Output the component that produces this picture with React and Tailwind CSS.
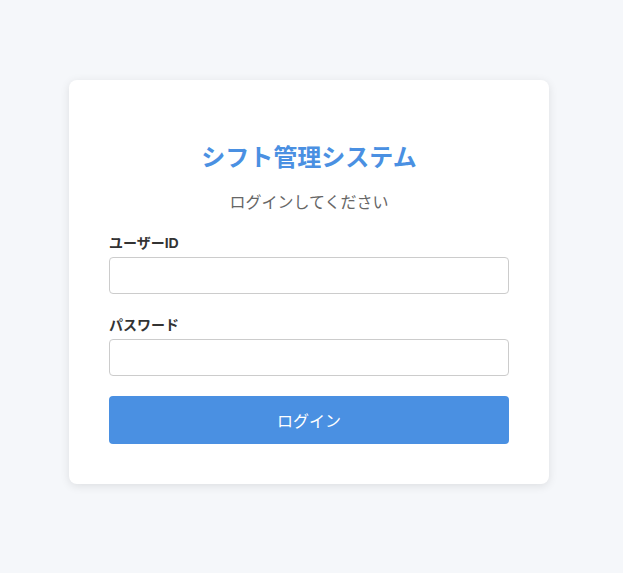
export default function App() {
  return (
    <div
      className="min-h-[573px] bg-[#f5f7fa] pt-[80px]"
      style={{ fontFamily: '"Liberation Sans", "Noto Sans CJK JP", sans-serif' }}
    >
      <div className="ml-[69px] w-[480px] rounded-lg bg-white px-10 pt-[60px] pb-10 shadow-[0_2px_10px_rgba(0,0,0,0.1)]">
        <h1 className="text-center text-2xl leading-[36px] font-bold text-[#4a90e2]">
          シフト管理システム
        </h1>
        <p className="mt-[15px] text-center text-base leading-6 text-[#666]">
          ログインしてください
        </p>

        <form className="mt-[18px]" onSubmit={(e) => e.preventDefault()}>
          <div className="mb-[21px]">
            <label className="block text-sm leading-5 font-bold text-[#333]">
              ユーザーID
            </label>
            <input
              type="text"
              className="mt-1 block h-[37px] w-full rounded border border-[#ccc] bg-white px-3 text-sm outline-none"
            />
          </div>
          <div className="mb-5">
            <label className="block text-sm leading-5 font-bold text-[#333]">
              パスワード
            </label>
            <input
              type="password"
              className="mt-1 block h-[37px] w-full rounded border border-[#ccc] bg-white px-3 text-sm outline-none"
            />
          </div>
          <button
            type="submit"
            className="block h-12 w-full rounded bg-[#4a90e2] pt-[3px] text-base text-white"
          >
            ログイン
          </button>
        </form>
      </div>
    </div>
  );
}
